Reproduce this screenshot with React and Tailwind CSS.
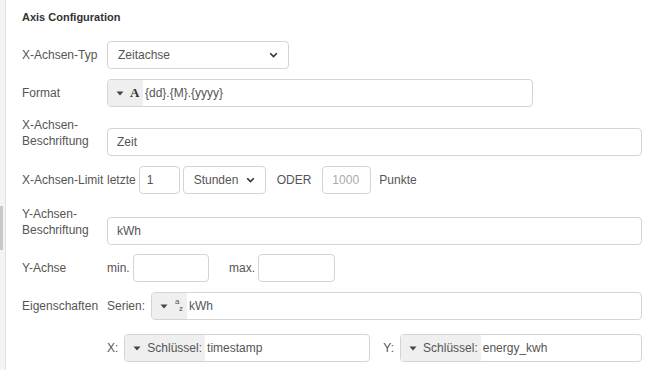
import React from 'react';

const Caret = () => (
  <svg width="8" height="5" viewBox="0 0 8 5" className="shrink-0">
    <path d="M0.5 0.5 L7.5 0.5 L4 4.5 Z" fill="#444" />
  </svg>
);

const Chevron = () => (
  <svg width="9" height="6" viewBox="0 0 9 6" className="shrink-0">
    <path d="M1.2 1.2 L4.5 4.5 L7.8 1.2" fill="none" stroke="#333" strokeWidth="1.6" />
  </svg>
);

const Box = ({ className = '', children }) => (
  <div className={`h-[28px] border border-[#d4d4d4] rounded-[4px] bg-white flex items-center text-[#555] ${className}`}>
    {children}
  </div>
);

const Select = ({ value, className = '' }) => (
  <Box className={`px-[10px] justify-between ${className}`}>
    <span>{value}</span>
    <Chevron />
  </Box>
);

const Typed = ({ addon, value, className = '', addonClass = '' }) => (
  <Box className={`overflow-hidden ${className}`}>
    <div className={`h-full bg-[#efefef] flex items-center gap-[6px] pl-[8px] pr-[3px] ${addonClass}`}>
      <Caret />
      {addon}
    </div>
    <span className="pl-[2px]">{value}</span>
  </Box>
);

const Label = ({ children }) => (
  <div className="w-[85px] shrink-0 text-[#555]">{children}</div>
);

export default function App() {
  return (
    <div
      className="w-[650px] h-[370px] bg-white flex overflow-hidden text-[12px] leading-[16px]"
      style={{ fontFamily: '"Liberation Sans", Arial, sans-serif' }}
    >
      <div className="w-[6px] shrink-0 bg-[#f4f4f4] border-r border-[#e0e0e0] flex flex-col">
        <div className="h-[206px]" />
        <div className="w-[3px] h-[44px] bg-[#c8c8c8]" />
      </div>

      <div className="flex-1 pl-[16px] pr-[8px] pt-[9px]">
        <div className="text-[11px] font-bold text-[#333] leading-[16px]">Axis Configuration</div>

        <div className="mt-[16px] flex items-center">
          <Label>X-Achsen-Typ</Label>
          <Select value="Zeitachse" className="w-[182px]" />
        </div>

        <div className="mt-[10px] flex items-center">
          <Label>Format</Label>
          <Typed
            className="w-[426px]"
            addonClass="w-[35px]"
            addon={<span className="text-[13px] font-bold text-[#333]" style={{ fontFamily: '"Liberation Serif", serif' }}>A</span>}
            value="{dd}.{M}.{yyyy}"
          />
        </div>

        <div className="mt-[10px] flex items-start">
          <Label>X-Achsen-<br />Beschriftung</Label>
          <Box className="flex-1 mt-[11px] px-[9px]">Zeit</Box>
        </div>

        <div className="mt-[10px] flex items-center text-[#555]">
          <Label>X-Achsen-Limit</Label>
          <span>letzte</span>
          <Box className="w-[41px] ml-[3px] px-[7px]">1</Box>
          <Select value="Stunden" className="w-[83px] ml-[3px]" />
          <span className="ml-[11px]">ODER</span>
          <Box className="w-[49px] ml-[11px] px-[9px] text-[#aaa]">1000</Box>
          <span className="ml-[8px]">Punkte</span>
        </div>

        <div className="mt-[12px] flex items-start">
          <Label>Y-Achsen-<br />Beschriftung</Label>
          <Box className="flex-1 mt-[11px] px-[9px]">kWh</Box>
        </div>

        <div className="mt-[9px] flex items-center text-[#555]">
          <Label>Y-Achse</Label>
          <span className="w-[26px]">min.</span>
          <Box className="w-[76px]" />
          <span className="ml-[20px] w-[29px]">max.</span>
          <Box className="w-[77px]" />
        </div>

        <div className="mt-[10px] flex items-center text-[#555]">
          <Label>Eigenschaften</Label>
          <span>Serien:</span>
          <Typed
            className="flex-1 ml-[6px]"
            addonClass="w-[35px]"
            addon={
              <span className="relative w-[10px] h-[16px] text-[8px] leading-[8px] text-[#555]">
                <span className="absolute left-[1px] top-[0px]">a</span>
                <span className="absolute left-[5px] top-[7px]">z</span>
              </span>
            }
            value="kWh"
          />
        </div>

        <div className="mt-[14px] flex items-center text-[#555]">
          <Label />
          <span>X:</span>
          <Typed
            className="w-[246px] ml-[6px]"
            addon={<span className="text-[#555]">Schlüssel:</span>}
            value="timestamp"
          />
          <span className="ml-[13px]">Y:</span>
          <Typed
            className="flex-1 ml-[6px]"
            addon={<span className="text-[#555]">Schlüssel:</span>}
            value="energy_kwh"
          />
        </div>
      </div>
    </div>
  );
}
